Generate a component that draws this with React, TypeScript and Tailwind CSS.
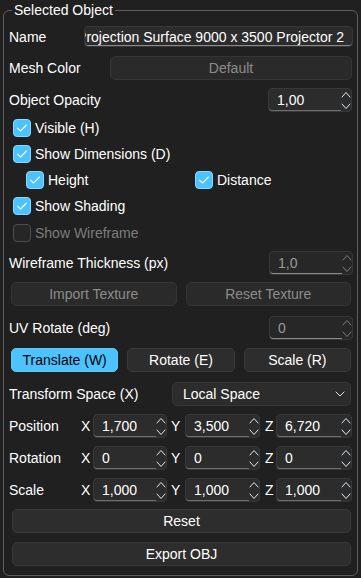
import React from "react";

const FONT = { fontFamily: '"Liberation Sans", Arial, sans-serif' };

function Check({ checked, disabled }: { checked?: boolean; disabled?: boolean }) {
  if (!checked) {
    return (
      <span
        className={
          "w-[18px] h-[18px] shrink-0 rounded-[4px] border bg-[#262626] " +
          (disabled ? "border-[#4e4e4e]" : "border-[#8a8a8a]")
        }
      />
    );
  }
  return (
    <span className="w-[18px] h-[18px] shrink-0 rounded-[4px] border border-[#8fd6ff] bg-[#4cc2ff] flex items-center justify-center">
      <svg width="12" height="10" viewBox="0 0 12 10" fill="none">
        <path d="M1.5 5.2 L4.5 8 L10.5 2" stroke="#f4fbff" strokeWidth="1.1" strokeLinecap="round" strokeLinejoin="round" />
      </svg>
    </span>
  );
}

function CheckRow({
  label,
  checked,
  disabled,
  className = "",
}: {
  label: string;
  checked?: boolean;
  disabled?: boolean;
  className?: string;
}) {
  return (
    <div className={"flex items-center gap-[4px] h-[18px] " + className}>
      <Check checked={checked} disabled={disabled} />
      <span className={disabled ? "text-[#7c7c7c]" : "text-white"}>{label}</span>
    </div>
  );
}

function Spin({
  value,
  disabled,
  className = "",
}: {
  value: string;
  disabled?: boolean;
  className?: string;
}) {
  const stroke = disabled ? "#7e7e7e" : "#dbe9f4";
  return (
    <div
      className={
        "flex h-[24px] shrink-0 rounded-[4px] border border-[#383838] " +
        (disabled ? "bg-[#272727] " : "bg-[#2c2c2c] ") +
        className
      }
    >
      <div
        className={
          "flex-1 min-w-0 flex items-center pl-[8px] rounded-bl-[3px] " +
          (disabled
            ? "text-[#9a9a9a] shadow-[inset_0_-1px_0_#8a8a8a]"
            : "text-white shadow-[inset_0_-1px_0_#6e6e6e]")
        }
      >
        {value}
      </div>
      <svg width="10" height="22" viewBox="0 0 10 22" fill="none" className="shrink-0">
        <path d="M1 8 L5 3.5 L9 8" stroke={stroke} strokeWidth="1" strokeLinecap="round" strokeLinejoin="round" />
        <path d="M1 15 L5 19.5 L9 15" stroke={stroke} strokeWidth="1" strokeLinecap="round" strokeLinejoin="round" />
      </svg>
    </div>
  );
}

function Btn({
  children,
  disabled,
  active,
  className = "",
}: {
  children: React.ReactNode;
  disabled?: boolean;
  active?: boolean;
  className?: string;
}) {
  let tone = "bg-[#2d2d2d] border-[#3a3a3a] text-white";
  if (disabled) tone = "bg-[#2a2a2a] border-[#353535] text-[#8c8c8c]";
  if (active) tone = "bg-[#4cc2ff] border-[#5ccaff] text-black";
  return (
    <div className={"flex items-center justify-center h-[24px] rounded-[5px] border " + tone + " " + className}>
      {children}
    </div>
  );
}

function XYZRow({ label, vals, className = "" }: { label: string; vals: string[]; className?: string }) {
  return (
    <div className={"flex items-center h-[24px] " + className}>
      <span className="w-[72px] shrink-0">{label}</span>
      <span className="w-[12px] shrink-0">X</span>
      <Spin value={vals[0]} className="w-[74px]" />
      <span className="w-[18px] shrink-0 pl-[4px]">Y</span>
      <Spin value={vals[1]} className="w-[75px]" />
      <span className="w-[16px] shrink-0 pl-[5px]">Z</span>
      <Spin value={vals[2]} className="w-[76px]" />
    </div>
  );
}

export default function App() {
  return (
    <div className="w-[361px] h-[578px] bg-[#202020] pl-[3px] text-[14px] text-white leading-none" style={FONT}>
      <fieldset className="w-[355px] min-w-0 h-[576px] border border-[#5e5e5e] rounded-[6px] pl-[5px] pr-[4px]">
        <legend className="ml-[3px] px-[2px] h-[20px] leading-[20px]">Selected Object</legend>
        <div className="flex flex-col min-w-0">
          {/* Name */}
          <div className="flex items-center h-[21px] mt-[6px] min-w-0">
            <span className="w-[75px] shrink-0">Name</span>
            <div className="flex-1 min-w-0 h-full flex items-center justify-end overflow-hidden rounded-[4px] border border-[#383838] bg-[#2c2c2c] pr-[8px] shadow-[inset_0_-1px_0_#8a8a8a]">
              <span className="shrink-0 whitespace-nowrap">Projection Surface 9000 x 3500 Projector 2</span>
            </div>
          </div>

          {/* Mesh color */}
          <div className="flex items-center h-[23px] mt-[9px]">
            <span className="w-[101px] shrink-0">Mesh Color</span>
            <Btn disabled className="flex-1 h-[23px] mr-[1px]">
              Default
            </Btn>
          </div>

          {/* Opacity */}
          <div className="flex items-center h-[24px] mt-[9px]">
            <span>Object Opacity</span>
            <Spin value="1,00" className="ml-auto w-[84px] mr-[1px]" />
          </div>

          <CheckRow label="Visible (H)" checked className="mt-[7px] ml-[4px]" />
          <CheckRow label="Show Dimensions (D)" checked className="mt-[8px] ml-[4px]" />
          <div className="flex items-center h-[18px] mt-[8px]">
            <CheckRow label="Height" checked className="ml-[17px] w-[169px]" />
            <CheckRow label="Distance" checked />
          </div>
          <CheckRow label="Show Shading" checked className="mt-[8px] ml-[4px]" />
          <CheckRow label="Show Wireframe" disabled className="mt-[9px] ml-[4px]" />

          {/* Wireframe thickness */}
          <div className="flex items-center h-[23px] mt-[9px]">
            <span>Wireframe Thickness (px)</span>
            <Spin value="1,0" disabled className="ml-auto w-[84px] h-[23px]" />
          </div>

          <div className="grid grid-cols-2 gap-[9px] mt-[8px] ml-[2px] mr-[2px]">
            <Btn disabled>Import Texture</Btn>
            <Btn disabled>Reset Texture</Btn>
          </div>

          {/* UV rotate */}
          <div className="flex items-center h-[23px] mt-[10px]">
            <span>UV Rotate (deg)</span>
            <Spin value="0" disabled className="ml-auto w-[84px] h-[23px]" />
          </div>

          <div className="grid grid-cols-3 gap-[9px] mt-[9px] ml-[2px] mr-[2px]">
            <Btn active className="h-[23px]">Translate (W)</Btn>
            <Btn className="h-[23px]">Rotate (E)</Btn>
            <Btn className="h-[23px]">Scale (R)</Btn>
          </div>

          {/* Transform space */}
          <div className="flex items-center h-[24px] mt-[10px]">
            <span className="w-[163px] shrink-0">Transform Space (X)</span>
            <div className="flex-1 h-full mr-[2px] flex items-center justify-between rounded-[5px] border border-[#383838] bg-[#2c2c2c] pl-[10px] pr-[5px]">
              <span>Local Space</span>
              <svg width="10" height="6" viewBox="0 0 10 6" fill="none">
                <path d="M1 1 L5 5 L9 1" stroke="#e6e6e6" strokeWidth="1" strokeLinecap="round" strokeLinejoin="round" />
              </svg>
            </div>
          </div>

          <XYZRow label="Position" vals={["1,700", "3,500", "6,720"]} className="mt-[8px]" />
          <XYZRow label="Rotation" vals={["0", "0", "0"]} className="mt-[8px]" />
          <XYZRow label="Scale" vals={["1,000", "1,000", "1,000"]} className="mt-[8px]" />

          <Btn className="mt-[7px] ml-[3px] mr-[2px]">Reset</Btn>
          <Btn className="mt-[9px] ml-[3px] mr-[2px]">Export OBJ</Btn>
        </div>
      </fieldset>
    </div>
  );
}
